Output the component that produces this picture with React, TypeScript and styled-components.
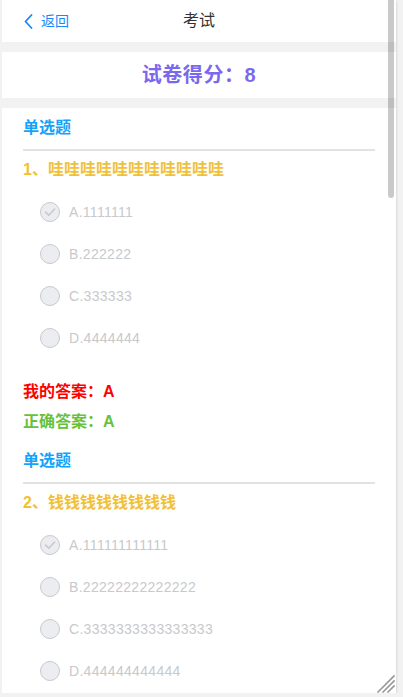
import React from 'react';
import styled, { createGlobalStyle } from 'styled-components';

const GlobalStyle = createGlobalStyle`
  html, body { margin: 0; padding: 0; background: #f2f2f2; }
  body { font-family: "Liberation Sans", "Noto Sans CJK SC", sans-serif; }
  * { box-sizing: border-box; }
`;

const Frame = styled.div`
  position: relative;
  margin-left: 2px;
  width: 394px;
  height: 693px;
  background: #fff;
  overflow: hidden;
  box-shadow: 1px 1px 2px rgba(0, 0, 0, 0.1);
`;

const ScrollThumb = styled.div`
  position: absolute;
  top: 0;
  right: 2px;
  width: 6px;
  height: 198px;
  border-radius: 0 0 3px 3px;
  background: rgba(0, 0, 0, 0.21);
`;

const Resizer = styled.svg`
  position: absolute;
  right: 1px;
  bottom: 0;
  width: 19px;
  height: 19px;
`;

const NavBar = styled.div`
  height: 42px;
  display: grid;
  grid-template-columns: 1fr auto 1fr;
  align-items: center;
`;

const Back = styled.div`
  display: flex;
  align-items: center;
  gap: 8px;
  padding-left: 22px;
  color: #1989fa;
  font-size: 14px;
  line-height: 20px;
`;

const Title = styled.div`
  color: #323233;
  font-size: 16px;
  line-height: 22px;
`;

const ScoreBar = styled.div`
  border-top: 10px solid #f2f2f2;
  border-bottom: 10px solid #f2f2f2;
  height: 66px;
  line-height: 46px;
  text-align: center;
  color: #7b68ee;
  font-size: 20px;
  font-weight: 700;
  letter-spacing: 0.6px;
`;

const Body = styled.div`
  padding: 0 21px;
`;

const Block = styled.div`
  padding-top: 9px;
  padding-bottom: 8px;
`;

const SectionTitle = styled.div`
  color: #14a3fb;
  font-size: 16px;
  font-weight: 700;
  line-height: 22px;
  padding-bottom: 10px;
  border-bottom: 2px solid #e2e2e2;
`;

const Question = styled.div`
  margin-top: 8px;
  color: #f2c037;
  font-size: 16px;
  font-weight: 700;
  line-height: 22px;
`;

const Options = styled.div`
  margin-top: 10px;
  padding-left: 17px;
`;

const OptionRow = styled.div`
  height: 42px;
  display: flex;
  align-items: center;
`;

const RadioIcon = styled.span`
  width: 20px;
  height: 20px;
  border-radius: 50%;
  border: 1px solid #c8c9cc;
  background: #ebedf0;
  display: flex;
  align-items: center;
  justify-content: center;
  flex: none;
`;

const OptionLabel = styled.span`
  margin-left: 9px;
  color: #c8c9cc;
  font-size: 14px;
  line-height: 20px;
  letter-spacing: 0.3px;
`;

const Answers = styled.div`
  margin-top: 22px;
  display: flex;
  flex-direction: column;
  gap: 8px;
`;

const AnswerLine = styled.div<{ $tone: 'mine' | 'right' }>`
  color: ${(p) => (p.$tone === 'mine' ? '#ff0000' : '#67c23a')};
  font-size: 16px;
  font-weight: 700;
  line-height: 22px;
`;

const ChevronLeft = () => (
  <svg width="9" height="15" viewBox="0 0 9 15" fill="none">
    <polyline points="7.5,1 1.5,7.5 7.5,14" stroke="#1989fa" strokeWidth="1.8" strokeLinecap="round" strokeLinejoin="round" />
  </svg>
);

const Check = () => (
  <svg width="14" height="14" viewBox="0 0 14 14" fill="none">
    <polyline points="2.5,7.2 5.8,10.2 11.6,4" stroke="#c8c9cc" strokeWidth="1.6" strokeLinecap="round" strokeLinejoin="round" />
  </svg>
);

type Q = {
  no: number;
  text: string;
  options: string[];
  checked: number;
  mine?: string;
  right?: string;
};

const questions: Q[] = [
  {
    no: 1,
    text: '哇哇哇哇哇哇哇哇哇哇哇',
    options: ['A.1111111', 'B.222222', 'C.333333', 'D.4444444'],
    checked: 0,
    mine: 'A',
    right: 'A',
  },
  {
    no: 2,
    text: '钱钱钱钱钱钱钱钱',
    options: ['A.111111111111', 'B.22222222222222', 'C.3333333333333333', 'D.444444444444'],
    checked: 0,
  },
];

export default function App() {
  return (
    <>
      <GlobalStyle />
      <Frame>
        <NavBar>
          <Back>
            <ChevronLeft />
            <span>返回</span>
          </Back>
          <Title>考试</Title>
          <div />
        </NavBar>
        <ScoreBar>试卷得分：8</ScoreBar>
        <Body>
          {questions.map((q) => (
            <Block key={q.no}>
              <SectionTitle>单选题</SectionTitle>
              <Question>
                {q.no}、{q.text}
              </Question>
              <Options>
                {q.options.map((o, i) => (
                  <OptionRow key={o}>
                    <RadioIcon>{i === q.checked ? <Check /> : null}</RadioIcon>
                    <OptionLabel>{o}</OptionLabel>
                  </OptionRow>
                ))}
              </Options>
              {q.mine && q.right ? (
                <Answers>
                  <AnswerLine $tone="mine">我的答案：{q.mine}</AnswerLine>
                  <AnswerLine $tone="right">正确答案：{q.right}</AnswerLine>
                </Answers>
              ) : null}
            </Block>
          ))}
        </Body>
        <ScrollThumb />
        <Resizer viewBox="0 0 19 19">
          <g stroke="#9a9a9a" strokeWidth="1.6" strokeLinecap="square">
            <line x1="2" y1="18" x2="18" y2="2" />
            <line x1="7" y1="18" x2="18" y2="7" />
            <line x1="12" y1="18" x2="18" y2="12" />
          </g>
        </Resizer>
      </Frame>
    </>
  );
}
